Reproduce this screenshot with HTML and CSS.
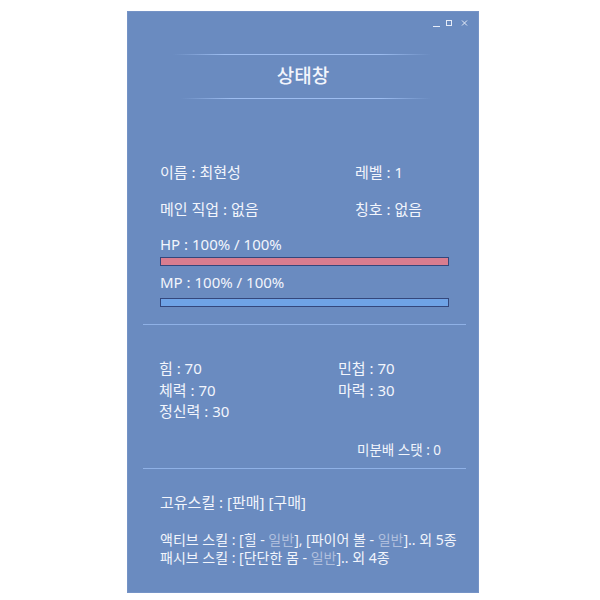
FILE: index.html
```html
<!DOCTYPE html>
<html lang="ko">
<head>
<meta charset="utf-8">
<link rel="stylesheet" href="styles.css">
</head>
<body>
<div class="window">
  <div class="controls">
    <svg width="40" height="10" viewBox="0 0 40 10">
      <line x1="1" y1="8.5" x2="8" y2="8.5" stroke="#e6ecf8" stroke-width="1"/>
      <rect x="14.5" y="2.5" width="5" height="5" fill="none" stroke="#e6ecf8" stroke-width="1"/>
      <path d="M30 2.5 L35 7.5 M35 2.5 L30 7.5" stroke="#e6ecf8" stroke-width="1"/>
    </svg>
  </div>
  <div class="title-block">
    <div class="title-line top"></div>
    <h1 class="title">상태창</h1>
    <div class="title-line bottom"></div>
  </div>

  <section class="info">
    <div class="row2">
      <span>이름 : 최현성</span><span class="right">레벨 : 1</span>
    </div>
    <div class="row2 second">
      <span>메인 직업 : 없음</span><span class="right">칭호 : 없음</span>
    </div>
    <div class="gauge-label">HP : 100% / 100%</div>
    <div class="bar hp"></div>
    <div class="gauge-label">MP : 100% / 100%</div>
    <div class="bar mp"></div>
  </section>
  <div class="sep"></div>

  <section class="stats">
    <div class="stat-grid">
      <span>힘 : 70</span><span>민첩 : 70</span>
      <span>체력 : 70</span><span>마력 : 30</span>
      <span>정신력 : 30</span><span></span>
    </div>
    <div class="free">미분배 스탯 : 0</div>
  </section>
  <div class="sep"></div>

  <section class="skills">
    <div class="unique">고유스킬 : [판매] [구매]</div>
    <div class="skill-line">액티브 스킬 : [힐 - <span class="grade">일반</span>], [파이어 볼 - <span class="grade">일반</span>].. 외 5종</div>
    <div class="skill-line">패시브 스킬 : [단단한 몸 - <span class="grade">일반</span>].. 외 4종</div>
  </section>
</div>
</body>
</html>
```

FILE: styles.css
```css
html, body {
  margin: 0;
  padding: 0;
  background: #ffffff;
}
body {
  font-family: "Noto Sans", "Noto Sans CJK KR", sans-serif;
  color: #f2f5fc;
}
.window {
  box-sizing: border-box;
  width: 352px;
  height: 582px;
  margin: 11px 0 0 127px;
  background: #6a8bc0;
  border: 1px solid #7593c6;
  display: flex;
  flex-direction: column;
}
.controls {
  height: 18px;
  display: flex;
  justify-content: flex-end;
  align-items: center;
  padding: 2px 6px 0 0;
}
.title-block {
  margin-top: 22px;
  display: flex;
  flex-direction: column;
  align-items: center;
}
.title-line {
  height: 1px;
  background: linear-gradient(90deg, rgba(150,185,235,0) 0%, #9dbdf0 20%, #9dbdf0 80%, rgba(150,185,235,0) 100%);
}
.title-line.top { width: 258px; margin-left: -2px; }
.title-line.bottom { width: 250px; margin-left: 6px; }
.title {
  margin: 0;
  height: 43px;
  line-height: 43px;
  font-size: 19px;
  font-weight: 500;
}
.info {
  padding: 62px 30px 0 32px;
  font-size: 15px;
}
.row2 {
  display: flex;
  height: 22px;
  line-height: 22px;
}
.row2 > span:first-child { width: 195px; }
.row2.second { margin-top: 15px; }
.gauge-label {
  height: 20px;
  line-height: 20px;
  margin-top: 14px;
  margin-left: 0;
}
.bar {
  box-sizing: border-box;
  width: 289px;
  height: 9px;
  border: 1.5px solid #34477c;
  margin-top: 3px;
}
.bar.hp { background: #d97d8f; }
.bar.mp { background: #6fa3e6; margin-top: 6px; }
.bar.hp + .gauge-label { margin-top: 6px; }
.sep {
  height: 1px;
  background: #8fb1e6;
  margin: 17px 12px 0 15px;
}
.stats {
  padding: 33px 30px 0 31px;
  font-size: 15px;
  height: 143px;
  box-sizing: border-box;
}
.stat-grid {
  display: grid;
  grid-template-columns: 179px 1fr;
  grid-auto-rows: 21.5px;
  line-height: 21.5px;
}
.free {
  text-align: right;
  font-size: 13.5px;
  margin-top: 16px;
  padding-right: 7px;
}
.stats + .sep { margin-top: 0; }
.skills {
  padding: 22px 10px 0 32px;
  font-size: 15px;
}
.unique {
  height: 22px;
  line-height: 22px;
}
.skill-line {
  font-size: 14px;
  line-height: 18px;
  height: 18px;
  white-space: nowrap;
}
.unique + .skill-line { margin-top: 18px; }
.grade { color: #b0bfdd; }
```
